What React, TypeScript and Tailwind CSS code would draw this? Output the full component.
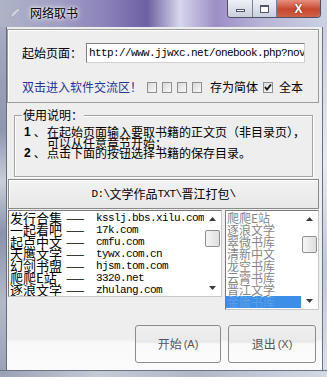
import React from 'react';

const leftRows = [
  ['发行合集', 'ksslj.bbs.xilu.com'],
  ['一起看吧', '17k.com'],
  ['起点中文', 'cmfu.com'],
  ['天鹰文学', 'tywx.com.cn'],
  ['幻剑书盟', 'hjsm.tom.com'],
  ['爬爬E站', '3320.net'],
  ['逐浪文学', 'zhulang.com'],
];

const rightRows = ['爬爬E站', '逐浪文学', '翠微书库', '清新中文', '龙空书库', '云霄书库', '晋江文学'];

function Scrollbar({ thumbTop }: { thumbTop: string }) {
  return (
    <div className="w-[17px] h-full bg-white flex flex-col items-center">
      <svg width="7" height="4" viewBox="0 0 7 4" className="mt-[6px]">
        <path d="M0 4 L3.5 0 L7 4 Z" fill="#3a3a3a" />
      </svg>
      <div className={`${thumbTop} w-[15px] h-[17px] rounded-[2px] border border-[#8f8f8f] bg-[linear-gradient(90deg,#f6f6f6,#dedede)]`} />
      <div className="flex-1" />
      <svg width="7" height="4" viewBox="0 0 7 4" className="mb-[6px]">
        <path d="M0 0 L7 0 L3.5 4 Z" fill="#3a3a3a" />
      </svg>
    </div>
  );
}

function Box({ checked }: { checked?: boolean }) {
  return (
    <div className="w-[10px] h-[11px] border border-[#8e8f8f] bg-[linear-gradient(135deg,#d8d8d8,#fafafa)] flex items-center justify-center">
      {checked && (
        <svg width="8" height="8" viewBox="0 0 8 8">
          <path d="M1 4 L3 6.5 L7 1.5" stroke="#111" strokeWidth="1.8" fill="none" />
        </svg>
      )}
    </div>
  );
}

export default function App() {
  return (
    <div className="w-[327px] h-[377px] flex flex-col overflow-hidden font-['Noto_Sans_CJK_SC',sans-serif] bg-[linear-gradient(90deg,#aeb4c6_0%,#a09ec4_18%,#8a80b8_33%,#6e60a2_45%,#d6d6ec_55%,#9c8ec6_66%,#b8b4d8_80%,#cad2e2_100%)]">
      {/* title bar */}
      <div className="h-[27px] flex items-start">
        <svg width="13" height="13" viewBox="0 0 13 13" className="ml-[8px] mt-[7px] opacity-60">
          <path d="M2 11 L4 6 L10 1 L12 3 L6 9 Z" fill="#e8e8f0" stroke="#9a9aaa" strokeWidth="0.8" />
        </svg>
        <span className="ml-[9px] mt-[6px] text-[12px] leading-[14px] text-black [text-shadow:0_0_6px_#fff,0_0_3px_#fff]">网络取书</span>
        <div className="ml-auto mr-[6px] flex h-[18px] rounded-b-[4px] border border-t-0 border-[#4e5266] overflow-hidden">
          <div className="w-[25px] h-full bg-[linear-gradient(180deg,#eef1f7,#c9cfdd)] border-r border-[#7a8094] flex items-center justify-center">
            <div className="w-[9px] h-[3px] mt-[4px] border border-[#505566] bg-white" />
          </div>
          <div className="w-[24px] h-full bg-[linear-gradient(180deg,#eef1f7,#c9cfdd)] border-r border-[#7a8094] flex items-center justify-center">
            <div className="w-[9px] h-[8px] border border-[#505566] border-t-2 bg-white" />
          </div>
          <div className="w-[43px] h-full bg-[linear-gradient(180deg,#e6907c,#c7482f_55%,#d06048)] flex items-center justify-center">
            <span className="text-white text-[12px] font-bold leading-none font-['Liberation_Sans',sans-serif] [text-shadow:0_0_2px_#6a1a10]">X</span>
          </div>
        </div>
      </div>

      <div className="flex h-[343px]">
        <div className="w-[7px] bg-[linear-gradient(180deg,#a7abc4_0%,#8e96b0_30%,#c9ced9_45%,#8a93ab_60%,#b3b9c8_80%,#9ba3b6_100%)] border-r border-[#656c7c]" />

        {/* client area */}
        <div className="w-[315px] flex flex-col bg-[linear-gradient(180deg,#eeeeee_0%,#eeeeee_91%,#f9f9f9_92%,#fbfbfb_100%)] text-[12px] text-black">
          {/* top panel */}
          <div className="mt-[2px] mr-[3px] h-[74px] border border-[#9c9c9c] shadow-[inset_1px_1px_0_#fff] flex flex-col pl-[14px]">
            <div className="mt-[13px] flex items-center h-[20px]">
              <span className="w-[60px] leading-[20px]">起始页面：</span>
              <div className="ml-[4px] w-[219px] h-[20px] border border-[#7f7f7f] border-r-[#d0d0d0] border-b-[#d0d0d0] bg-white flex items-center pl-[2px] overflow-hidden whitespace-nowrap">
                <span className="w-px h-[13px] bg-black" />
                <span className="font-['Liberation_Mono',monospace] text-[11px] tracking-[-0.6px]">http://www.jjwxc.net/onebook.php?nov</span>
              </div>
            </div>
            <div className="mt-[17px] h-[14px] flex items-center whitespace-nowrap">
              <span className="text-[#24369a] leading-[14px]">双击进入软件交流区！</span>
              <div className="ml-[5px] flex gap-[5px]">
                <Box />
                <Box />
                <Box />
                <Box />
              </div>
              <span className="ml-[8px] leading-[14px]">存为简体</span>
              <div className="ml-[5px]">
                <Box checked />
              </div>
              <span className="ml-[6px] leading-[14px]">全本</span>
            </div>
          </div>

          {/* usage group */}
          <div className="relative mt-[12px] ml-[7px] w-[299px] h-[62px] border border-[#a3a3a3] shadow-[inset_1px_1px_0_#fff,1px_1px_0_#fff] pl-[9px] pt-[11px]">
            <span className="absolute left-[7px] top-[-7px] px-[1px] bg-[#eeeeee] leading-[12px]">使用说明：</span>
            <div className="grid grid-cols-[23px_1fr] leading-[10.5px] whitespace-nowrap">
              <div className="flex">
                <span className="font-bold font-['Liberation_Sans',sans-serif]">1</span>
                <span className="ml-[3px]">、</span>
              </div>
              <span>在起始页面输入要取书籍的正文页（非目录页），</span>
              <div />
              <span>可以从任意章节开始；</span>
              <div className="flex">
                <span className="font-bold font-['Liberation_Sans',sans-serif]">2</span>
                <span className="ml-[3px]">、</span>
              </div>
              <span>点击下面的按钮选择书籍的保存目录。</span>
            </div>
          </div>

          {/* save path */}
          <div className="mt-[2px] ml-[1px] mr-[3px] h-[30px] border border-[#8a8a8a] bg-[linear-gradient(180deg,#f2f2f2,#e8e8e8)] shadow-[inset_1px_1px_0_#fff] flex items-center justify-center whitespace-nowrap">
            <span className="font-['Liberation_Mono',monospace] text-[11px] tracking-[-0.6px]">{'D:\\'}</span>
            <span>文学作品</span>
            <span className="font-['Liberation_Mono',monospace] text-[11px] tracking-[-0.6px]">{'TXT\\'}</span>
            <span>晋江打包</span>
            <span className="font-['Liberation_Mono',monospace] text-[11px] tracking-[-0.6px]">{'\\'}</span>
          </div>

          {/* lists */}
          <div className="mt-[1px] flex items-start">
            <div className="ml-[1px] w-[214px] h-[87px] border border-[#7a7a7a] border-r-[#c8c8c8] border-b-[#c8c8c8] bg-white flex">
              <div className="flex-1 pt-[1px] pl-[1px] overflow-hidden">
                {leftRows.map(([name, url]) => (
                  <div key={name} className="h-[12px] grid grid-cols-[56px_30px_1fr] items-center whitespace-nowrap">
                    <span className="text-[13px] leading-[12px]">{name}</span>
                    <span className="text-[11px] leading-[12px] tracking-[1px]">——</span>
                    <span className="font-['Liberation_Mono',monospace] text-[11px] leading-[12px] tracking-[-0.6px]">{url}</span>
                  </div>
                ))}
              </div>
              <Scrollbar thumbTop="mt-[9px]" />
            </div>

            <div className="ml-[3px] w-[94px] h-[100px] border border-[#7a7a7a] border-r-[#c8c8c8] border-b-[#c8c8c8] bg-white flex">
              <div className="w-[75px] pt-[1px] overflow-hidden">
                {rightRows.map((name) => (
                  <div key={name} className="h-[12px] pl-[1px] text-[12px] leading-[12px] text-[#858585] [text-shadow:1px_1px_0_#fff] whitespace-nowrap">
                    {name}
                  </div>
                ))}
                <div className="h-[12px] bg-[#3d8ee6] pl-[1px] text-[12px] leading-[12px] text-[#5c9fe8] whitespace-nowrap">金庸书库</div>
              </div>
              <Scrollbar thumbTop="mt-[15px]" />
            </div>
          </div>

          {/* buttons */}
          <div className="mt-[15px] mr-[6px] flex justify-end gap-[7px]">
            <button className="w-[86px] h-[38px] rounded-[3px] border border-[#8c8c8c] bg-[linear-gradient(180deg,#f0f0f0_0%,#e9e9e9_45%,#f9f9f9_50%,#fcfcfc_100%)] text-[12px] text-[#555] flex items-center justify-center">
              开始<span className="text-[11px] font-['Liberation_Sans',sans-serif] ml-[2px]">(A)</span>
            </button>
            <button className="w-[88px] h-[38px] rounded-[3px] border border-[#8c8c8c] bg-[linear-gradient(180deg,#f0f0f0_0%,#e9e9e9_45%,#f9f9f9_50%,#fcfcfc_100%)] text-[12px] text-[#555] flex items-center justify-center">
              退出<span className="text-[11px] font-['Liberation_Sans',sans-serif] ml-[2px]">(X)</span>
            </button>
          </div>
        </div>

        <div className="w-[5px] bg-[linear-gradient(180deg,#c6d0e2_0%,#e4ecf6_40%,#bcc8dc_70%,#d8e2ee_100%)] border-l border-[#6b7284]" />
      </div>

      <div className="h-[7px] bg-[linear-gradient(90deg,#9aa2b6,#c4cad6_30%,#b0b8c8_60%,#d2dae6)] border-t border-[#6b7284]" />
    </div>
  );
}
